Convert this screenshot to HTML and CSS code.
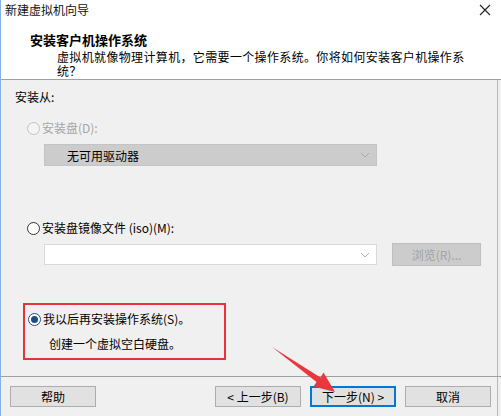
FILE: index.html
```html
<!DOCTYPE html>
<html lang="zh-CN">
<head>
    <meta charset="UTF-8">
    <title>新建虚拟机向导</title>
    <link rel="stylesheet" href="styles.css">
</head>
<body>
    <div class="window">
        <!-- Header -->
        <div class="header">
            <div class="titlebar">
                <span class="title">新建虚拟机向导</span>
                <span class="close">
                    <svg width="12" height="12" viewBox="0 0 12 12"><path d="M1 1 L11 11 M11 1 L1 11" stroke="#222" stroke-width="1.1" fill="none"/></svg>
                </span>
            </div>
            <div class="heading">安装客户机操作系统</div>
            <div class="subtitle">虚拟机就像物理计算机，它需要一个操作系统。你将如何安装客户机操作系统？</div>
        </div>

        <!-- Body -->
        <div class="content">
            <div class="section-label">安装从:</div>

            <div class="option disabled">
                <span class="radio"></span>
                <span>安装盘(D):</span>
            </div>
            <div class="field-row">
                <div class="select select-disabled">
                    <span>无可用驱动器</span>
                    <svg class="chevron" width="10" height="6" viewBox="0 0 10 6"><path d="M1 1 L5 5 L9 1" stroke="#a8a8a8" stroke-width="1" fill="none"/></svg>
                </div>
            </div>

            <div class="option option-iso">
                <span class="radio"></span>
                <span>安装盘镜像文件 (iso)(M):</span>
            </div>
            <div class="field-row iso-row">
                <div class="select select-input">
                    <span></span>
                    <svg class="chevron" width="10" height="6" viewBox="0 0 10 6"><path d="M1 1 L5 5 L9 1" stroke="#b0b0b0" stroke-width="1" fill="none"/></svg>
                </div>
                <div class="btn btn-disabled">浏览(R)...</div>
            </div>

            <div class="highlight">
                <div class="option selected">
                    <span class="radio"></span>
                    <span>我以后再安装操作系统(S)。</span>
                </div>
                <div class="option-note">创建一个虚拟空白硬盘。</div>
            </div>
        </div>

        <!-- Footer buttons -->
        <div class="footer">
            <div class="btn">帮助</div>
            <div class="btn btn-back">&lt; 上一步(B)</div>
            <div class="btn btn-default">下一步(N) &gt;</div>
            <div class="btn">取消</div>
        </div>

        <!-- annotation arrow -->
        <svg class="arrow" width="501" height="416" viewBox="0 0 501 416">
            <polygon points="272,347 320.5,377.5 323.5,372.5 335,392 313.5,386.5 316.5,382" fill="#e8383d"/>
        </svg>
    </div>
</body>
</html>
```

FILE: styles.css
```css
* {
    margin: 0;
    padding: 0;
    box-sizing: border-box;
}

body {
    font-family: "Noto Sans CJK SC", "Liberation Sans", sans-serif;
    font-size: 12px;
    color: #000;
    background: #f0f0f0;
    width: 501px;
    height: 416px;
    overflow: hidden;
}

.window {
    position: relative;
    width: 501px;
    height: 416px;
    background: #f0f0f0;
    border-left: 1px solid #86b2e0;
    box-shadow: inset -3px 0 0 #f0f0f0, inset -4px 0 0 #9cbfe6;
}

/* Header */
.header {
    background: #fff;
    height: 80px;
    border-bottom: 1px solid #a0a0a0;
}
.titlebar {
    display: flex;
    justify-content: space-between;
    align-items: center;
    height: 20px;
    padding: 0 10px 0 4px;
    line-height: 20px;
}
.title {
    font-size: 12px;
    color: #111;
}
.close {
    display: flex;
    align-items: center;
}
.heading {
    margin-top: 11px;
    padding-left: 29px;
    font-size: 13px;
    font-weight: 700;
    line-height: 18px;
}
.subtitle {
    padding-left: 56px;
    width: 468px;
    line-height: 14px;
    margin-top: 1px;
    letter-spacing: 0.35px;
}

/* Body */
.content {
    padding: 9px 0 0 14px;
}
.section-label {
    line-height: 16px;
}
.option {
    display: flex;
    align-items: center;
    line-height: 16px;
    margin-top: 15px;
    padding-left: 12px;
}
.option-iso {
    margin-top: 54px;
}
.radio {
    width: 13px;
    height: 13px;
    border-radius: 50%;
    border: 1px solid #333;
    background: #fff;
    margin-right: 2px;
    position: relative;
    flex-shrink: 0;
}
.disabled {
    color: #a6a6a6;
}
.disabled .radio {
    border-color: #c2c2c2;
    background: #f4f4f4;
}
.selected .radio {
    border-color: #2a4f80;
}
.selected .radio::after {
    content: "";
    position: absolute;
    left: 2px;
    top: 2px;
    width: 7px;
    height: 7px;
    border-radius: 50%;
    background: #1f4b84;
}

.field-row {
    display: flex;
    align-items: center;
    margin-top: 8px;
    padding-left: 29px;
}
.iso-row {
    margin-top: 7px;
    gap: 15px;
}
.select {
    width: 333px;
    height: 22px;
    display: flex;
    align-items: center;
    justify-content: space-between;
    padding: 0 6px 0 22px;
}
.select-disabled {
    background: #cccccc;
    border: 1px solid #c4c4c4;
    color: #000;
}
.select-input {
    height: 21px;
    background: #fff;
    border: 1px solid #d9d9d9;
}

.highlight {
    margin-top: 37px;
    margin-left: 8px;
    width: 203px;
    height: 57px;
    border: 2px solid #e8323a;
    padding-top: 6px;
}
.highlight .option {
    margin-top: 0;
    padding-left: 3px;
}
.option-note {
    margin-top: 9px;
    padding-left: 24px;
    line-height: 16px;
}

/* Buttons */
.btn {
    width: 86px;
    height: 21px;
    background: #e1e1e1;
    border: 1px solid #adadad;
    display: flex;
    align-items: center;
    justify-content: center;
    line-height: 16px;
}
.btn-disabled {
    width: 89px;
    height: 23px;
    background: #cccccc;
    border-color: #bfbfbf;
    color: #a3a3a3;
}
.footer {
    position: absolute;
    left: 0;
    right: 0;
    top: 376px;
    height: 40px;
    border-top: 1px solid #a0a0a0;
    display: flex;
    align-items: flex-start;
    gap: 9px;
    padding: 9px 10px 0 9px;
}
.btn-back {
    margin-left: auto;
}
.btn-default {
    border: 2px solid #0078d7;
}

/* annotation overlay */
.arrow {
    position: absolute;
    left: -1px;
    top: 0;
    pointer-events: none;
}
```
